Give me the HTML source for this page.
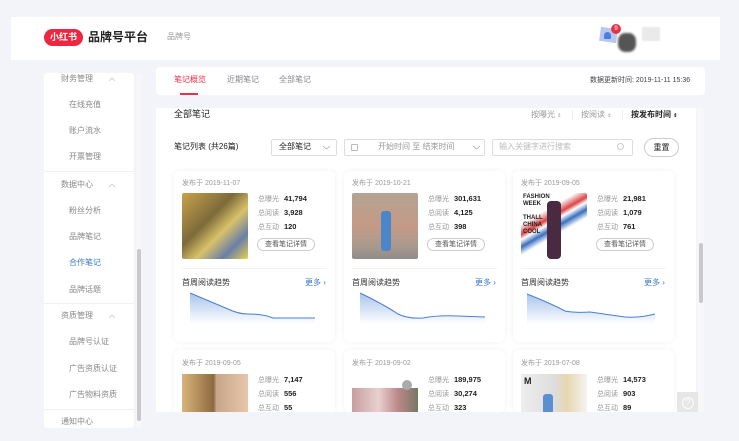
<!DOCTYPE html>
<html><head><meta charset="utf-8"><style>
*{margin:0;padding:0;box-sizing:border-box}
body{width:739px;height:441px;overflow:hidden;background:#f2f4fa;font-family:"Liberation Sans","Noto Sans CJK SC",sans-serif;position:relative;color:#333}
.a{position:absolute}
.t{position:absolute;white-space:nowrap;line-height:1}
.card{position:absolute;background:#fff;border-radius:6px;box-shadow:0 0 6px rgba(0,0,0,.06);width:161px;overflow:hidden}
.lbl{font-size:7px;color:#999}
.val{font-size:7.5px;color:#222;font-weight:bold}
.btn{position:absolute;border:1px solid #ccc;border-radius:8px;font-size:7px;color:#555;text-align:center;line-height:11px;width:58px;height:13px}
.side{font-size:8px;color:#888}
.chev{position:absolute}
</style></head><body>
<!-- header -->
<div class="a" style="left:11px;top:17px;width:709px;height:43px;background:#fff"></div>
<div class="a" style="left:44px;top:29px;width:39px;height:17px;border-radius:9px;background:#ee2741;color:#fff;font-size:9px;font-weight:bold;text-align:center;line-height:17px">小红书</div>
<div class="t" style="left:88px;top:31px;font-size:12px;font-weight:bold;color:#222">品牌号平台</div>
<div class="t" style="left:167px;top:33px;font-size:8px;color:#999">品牌号</div>
<div class="a" style="left:600px;top:28px;width:17px;height:14px;background:#b7c8ee;transform:rotate(8deg)"></div>
<div class="a" style="left:604px;top:32px;width:7px;height:7px;border-radius:4px 4px 1px 1px;background:#4a7fe0"></div>
<div class="a" style="left:611px;top:24px;width:10px;height:10px;border-radius:50%;background:#e8324a;color:#fff;font-size:6px;text-align:center;line-height:10px">9</div>
<div class="a" style="left:618px;top:33px;width:18px;height:19px;background:#555;border-radius:40%;filter:blur(1px)"></div>
<div class="a" style="left:642px;top:27px;width:18px;height:14px;background:#eaeaea;filter:blur(.8px)"></div>
<!-- sidebar -->
<div class="a" style="left:44px;top:73px;width:90px;height:355px;background:#fff;border-radius:3px"></div>
<div class="a" style="left:136px;top:73px;width:6px;height:355px;background:#f7f7f9"></div>
<div class="a" style="left:137px;top:249px;width:4px;height:172px;background:#c9c9c9;border-radius:2px"></div>
<div class="t side" style="left:61px;top:75px">财务管理</div>
<svg class="chev" style="left:108px;top:77px" width="8" height="5"><path d="M1 4 L4 1 L7 4" fill="none" stroke="#ccc" stroke-width="0.8"/></svg>
<div class="t side" style="left:69px;top:101px">在线充值</div>
<div class="t side" style="left:69px;top:127px">账户流水</div>
<div class="t side" style="left:69px;top:153px">开票管理</div>
<div class="a" style="left:44px;top:171px;width:90px;height:1px;background:#f0f0f0"></div>
<div class="t side" style="left:61px;top:181px">数据中心</div>
<svg class="chev" style="left:108px;top:183px" width="8" height="5"><path d="M1 4 L4 1 L7 4" fill="none" stroke="#ccc" stroke-width="0.8"/></svg>
<div class="t side" style="left:69px;top:207px">粉丝分析</div>
<div class="t side" style="left:69px;top:233px">品牌笔记</div>
<div class="t side" style="left:69px;top:259px;color:#3a78c9">合作笔记</div>
<div class="t side" style="left:69px;top:286px">品牌话题</div>
<div class="a" style="left:44px;top:303px;width:90px;height:1px;background:#f0f0f0"></div>
<div class="t side" style="left:61px;top:312px">资质管理</div>
<svg class="chev" style="left:108px;top:314px" width="8" height="5"><path d="M1 4 L4 1 L7 4" fill="none" stroke="#ccc" stroke-width="0.8"/></svg>
<div class="t side" style="left:69px;top:338px">品牌号认证</div>
<div class="t side" style="left:69px;top:365px">广告资质认证</div>
<div class="t side" style="left:69px;top:391px">广告物料资质</div>
<div class="a" style="left:44px;top:409px;width:90px;height:1px;background:#f0f0f0"></div>
<div class="t side" style="left:61px;top:418px">通知中心</div>
<!-- tabs -->
<div class="a" style="left:156px;top:67px;width:549px;height:28px;background:#fff;border-radius:4px"></div>
<div class="t" style="left:174px;top:76px;font-size:8px;color:#e8324a">笔记概览</div>
<div class="a" style="left:180px;top:93px;width:18px;height:2px;background:#e8324a"></div>
<div class="t" style="left:227px;top:76px;font-size:8px;color:#888">近期笔记</div>
<div class="t" style="left:279px;top:76px;font-size:8px;color:#888">全部笔记</div>
<div class="t" style="left:590px;top:77px;font-size:7px;color:#444">数据更新时间: 2019-11-11 15:36</div>
<!-- main -->
<div class="a" style="left:156px;top:108px;width:540px;height:304px;background:#fff"></div>
<div class="a" style="left:697px;top:108px;width:7px;height:304px;background:#f7f7f9"></div>
<div class="a" style="left:699px;top:243px;width:4px;height:60px;background:#c9c9c9;border-radius:2px"></div>
<div class="t" style="left:174px;top:110px;font-size:9px;color:#222">全部笔记</div>
<div class="t" style="left:531px;top:111px;font-size:8px;color:#999">按曝光 <span style="font-size:5px">⇕</span></div>
<div class="a" style="left:572px;top:110px;width:1px;height:10px;background:#eee"></div>
<div class="t" style="left:581px;top:111px;font-size:8px;color:#999">按阅读 <span style="font-size:5px">⇕</span></div>
<div class="a" style="left:622px;top:110px;width:1px;height:10px;background:#eee"></div>
<div class="t" style="left:631px;top:111px;font-size:8px;color:#222;font-weight:bold">按发布时间 <span style="font-size:5px">⇕</span></div>
<div class="t" style="left:174px;top:143px;font-size:8px;color:#222">笔记列表 (共26篇)</div>
<div class="a" style="left:271px;top:139px;width:66px;height:17px;border:1px solid #ddd;border-radius:2px"></div>
<div class="t" style="left:279px;top:143px;font-size:8px;color:#222">全部笔记</div>
<svg class="chev" style="left:322px;top:145px" width="9" height="5"><path d="M1 1 L4.5 4 L8 1" fill="none" stroke="#aaa" stroke-width="0.8"/></svg>
<div class="a" style="left:344px;top:139px;width:141px;height:17px;border:1px solid #ddd;border-radius:2px"></div>
<div class="a" style="left:351px;top:144px;width:7px;height:7px;border:1px solid #bbb;border-radius:1px"></div>
<div class="t" style="left:378px;top:143px;font-size:8px;color:#999">开始时间 至 结束时间</div>
<svg class="chev" style="left:472px;top:145px" width="9" height="5"><path d="M1 1 L4.5 4 L8 1" fill="none" stroke="#aaa" stroke-width="0.8"/></svg>
<div class="a" style="left:492px;top:139px;width:141px;height:17px;border:1px solid #ddd;border-radius:2px"></div>
<div class="t" style="left:499px;top:143px;font-size:8px;color:#bbb">输入关键字进行搜索</div>
<div class="a" style="left:617px;top:143px;width:7px;height:7px;border:1px solid #ccc;border-radius:50%"></div>
<div class="a" style="left:644px;top:138px;width:35px;height:19px;border:1px solid #ccc;border-radius:10px;font-size:8px;text-align:center;line-height:17px;color:#222">重置</div>
<!-- help -->
<div class="a" style="left:677px;top:392px;width:21px;height:22px;background:#e6e6e6"></div>
<div class="a" style="left:682px;top:397px;width:12px;height:12px;border:1px solid #fff;border-radius:50%;color:#fff;font-size:8px;text-align:center;line-height:10px">?</div>

<svg width="0" height="0" style="position:absolute"><defs><linearGradient id="g" x1="0" y1="0" x2="0" y2="1"><stop offset="0" stop-color="#a9c4ec"/><stop offset="1" stop-color="#fff"/></linearGradient></defs></svg>
<!-- row 1 cards -->
<div class="card" style="left:174px;top:171px;height:171px">
<div class="t lbl" style="left:8px;top:9px">发布于 2019-11-07</div>
<div class="a" style="left:8px;top:22px;width:66px;height:66px;border-radius:2px;background:linear-gradient(135deg,#c9a24a,#7d6a3a 40%,#d9c26a 60%,#6a7fa8 80%,#e8d050)"></div>
<div class="t lbl" style="left:84px;top:24px">总曝光 <b class="val" style="margin-left:3px">41,794</b></div>
<div class="t lbl" style="left:84px;top:38px">总阅读 <b class="val" style="margin-left:3px">3,928</b></div>
<div class="t lbl" style="left:84px;top:52px">总互动 <b class="val" style="margin-left:3px">120</b></div>
<div class="btn" style="left:83px;top:67px">查看笔记详情</div>
<div class="a" style="left:8px;top:97px;width:145px;height:1px;background:#f2f2f2"></div>
<div class="t" style="left:8px;top:108px;font-size:8px;color:#333">首周阅读趋势</div>
<div class="t" style="left:131px;top:108px;font-size:8px;color:#3a78c9">更多 ›</div>
<svg class="a" style="left:14px;top:118px" width="130" height="35"><path d="M2 4 L40 20 Q50 25 60 25 Q75 25 85 29 L127 29 L127 35 L2 35Z" fill="url(#g)"/><path d="M2 4 L40 20 Q50 25 60 25 Q75 25 85 29 L127 29" fill="none" stroke="#4a7fd0" stroke-width="1"/></svg>
</div>
<div class="card" style="left:344px;top:171px;height:171px">
<div class="t lbl" style="left:8px;top:9px">发布于 2019-10-21</div>
<div class="a" style="left:8px;top:22px;width:66px;height:66px;border-radius:2px;background:linear-gradient(#b4a392,#c49a86 50%,#aa9a8e 80%,#8f8b88)"></div>
<div class="a" style="left:37px;top:40px;width:10px;height:40px;background:#4d86c8;border-radius:3px"></div>
<div class="t lbl" style="left:84px;top:24px">总曝光 <b class="val" style="margin-left:3px">301,631</b></div>
<div class="t lbl" style="left:84px;top:38px">总阅读 <b class="val" style="margin-left:3px">4,125</b></div>
<div class="t lbl" style="left:84px;top:52px">总互动 <b class="val" style="margin-left:3px">398</b></div>
<div class="btn" style="left:83px;top:67px">查看笔记详情</div>
<div class="a" style="left:8px;top:97px;width:145px;height:1px;background:#f2f2f2"></div>
<div class="t" style="left:8px;top:108px;font-size:8px;color:#333">首周阅读趋势</div>
<div class="t" style="left:131px;top:108px;font-size:8px;color:#3a78c9">更多 ›</div>
<svg class="a" style="left:14px;top:118px" width="130" height="35"><path d="M2 4 Q25 15 40 25 Q50 30 65 29 Q80 26 100 27 L127 28 L127 35 L2 35Z" fill="url(#g)"/><path d="M2 4 Q25 15 40 25 Q50 30 65 29 Q80 26 100 27 L127 28" fill="none" stroke="#4a7fd0" stroke-width="1"/></svg>
</div>
<div class="card" style="left:513px;top:171px;height:171px">
<div class="t lbl" style="left:8px;top:9px">发布于 2019-09-05</div>
<div class="a" style="left:8px;top:22px;width:66px;height:66px;border-radius:2px;background:linear-gradient(150deg,#fff 30%,#d44 40%,#fff 45%,#3a6fc0 52%,#fff 60%)"></div>
<div class="t" style="left:10px;top:23px;font-size:6px;font-weight:bold;color:#222;line-height:7px">FASHION<br>WEEK<br><br>THALL<br>CHINA<br>COOL</div>
<div class="a" style="left:34px;top:30px;width:14px;height:58px;background:#4a2a40;border-radius:4px"></div>
<div class="t lbl" style="left:84px;top:24px">总曝光 <b class="val" style="margin-left:3px">21,981</b></div>
<div class="t lbl" style="left:84px;top:38px">总阅读 <b class="val" style="margin-left:3px">1,079</b></div>
<div class="t lbl" style="left:84px;top:52px">总互动 <b class="val" style="margin-left:3px">761</b></div>
<div class="btn" style="left:83px;top:67px">查看笔记详情</div>
<div class="a" style="left:8px;top:97px;width:145px;height:1px;background:#f2f2f2"></div>
<div class="t" style="left:8px;top:108px;font-size:8px;color:#333">首周阅读趋势</div>
<div class="t" style="left:131px;top:108px;font-size:8px;color:#3a78c9">更多 ›</div>
<svg class="a" style="left:12px;top:118px" width="135" height="35"><path d="M2 5 Q25 14 40 22 Q50 24 65 23 L100 28 Q115 29 130 25 L130 35 L2 35Z" fill="url(#g)"/><path d="M2 5 Q25 14 40 22 Q50 24 65 23 L100 28 Q115 29 130 25" fill="none" stroke="#4a7fd0" stroke-width="1"/></svg>
</div>
<!-- row 2 -->
<div class="card" style="left:174px;top:350px;height:62px;border-radius:6px 6px 0 0">
<div class="t lbl" style="left:8px;top:10px">发布于 2019-09-05</div>
<div class="a" style="left:8px;top:24px;width:66px;height:40px;background:linear-gradient(90deg,#d9b47a,#8c6a3e 48%,#c8a68a 52%,#e6c6a8)"></div>
<div class="t lbl" style="left:84px;top:26px">总曝光 <b class="val" style="margin-left:3px">7,147</b></div>
<div class="t lbl" style="left:84px;top:40px">总阅读 <b class="val" style="margin-left:3px">556</b></div>
<div class="t lbl" style="left:84px;top:54px">总互动 <b class="val" style="margin-left:3px">55</b></div>
</div>
<div class="card" style="left:344px;top:350px;height:62px">
<div class="t lbl" style="left:8px;top:10px">发布于 2019-09-02</div>
<div class="a" style="left:8px;top:38px;width:66px;height:26px;background:linear-gradient(90deg,#c79ea0,#e9d0cf 40%,#b88 70%,#776)"></div>
<div class="a" style="left:58px;top:30px;width:10px;height:10px;border-radius:50%;background:#aaa"></div>
<div class="t lbl" style="left:84px;top:26px">总曝光 <b class="val" style="margin-left:3px">189,975</b></div>
<div class="t lbl" style="left:84px;top:40px">总阅读 <b class="val" style="margin-left:3px">30,274</b></div>
<div class="t lbl" style="left:84px;top:54px">总互动 <b class="val" style="margin-left:3px">323</b></div>
</div>
<div class="card" style="left:513px;top:350px;height:62px">
<div class="t lbl" style="left:8px;top:10px">发布于 2019-07-08</div>
<div class="a" style="left:8px;top:24px;width:66px;height:40px;background:linear-gradient(90deg,#eee,#ddd 50%,#e8d6b0 70%,#f4f4f4)"></div>
<div class="t" style="left:11px;top:27px;font-size:9px;font-weight:bold;color:#222">M</div>
<div class="a" style="left:30px;top:44px;width:10px;height:20px;background:#5b8fd0;border-radius:3px"></div>
<div class="t lbl" style="left:84px;top:26px">总曝光 <b class="val" style="margin-left:3px">14,573</b></div>
<div class="t lbl" style="left:84px;top:40px">总阅读 <b class="val" style="margin-left:3px">903</b></div>
<div class="t lbl" style="left:84px;top:54px">总互动 <b class="val" style="margin-left:3px">89</b></div>
</div>
<div class="a" style="left:156px;top:412px;width:560px;height:29px;background:#f2f4fa"></div>
</body></html>
